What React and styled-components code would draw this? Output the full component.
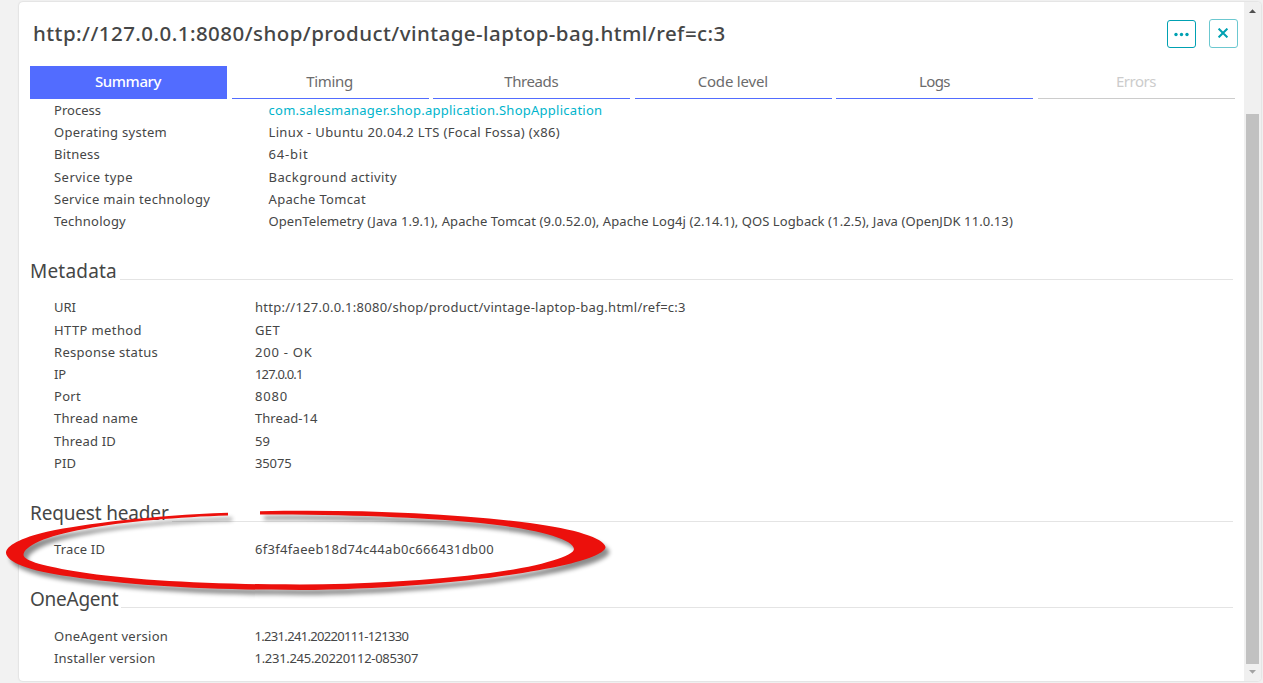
import React from 'react';
import styled, { createGlobalStyle } from 'styled-components';

const GlobalStyle = createGlobalStyle`
  *, *::before, *::after { box-sizing: border-box; }
  html, body { margin: 0; height: 100%; overflow: hidden; background: #f2f2f2; }
  body {
    font-family: "Noto Sans", "Open Sans", sans-serif;
    font-size: 13px;
    color: #454646;
  }
`;

const Page = styled.div`
  position: relative;
  display: flex;
  width: 1263px;
  height: 683px;
  padding: 2px 2px 2px 19px;
  background: #f2f2f2;
  overflow: hidden;
`;

const Panel = styled.main`
  display: flex;
  flex: 1;
  background: #fff;
  border-radius: 4px;
  overflow: hidden;
  box-shadow: 0 0 2px 0 rgba(0, 0, 0, 0.2);
`;

const Content = styled.div`
  flex: 1;
  display: flex;
  flex-direction: column;
  padding: 0 9px 0 11px;
`;

const Header = styled.header`
  display: flex;
  align-items: flex-start;
  justify-content: space-between;
  height: 64px;
  padding: 0 0 0 3px;
`;

const Title = styled.h1`
  margin: 16px 0 0;
  font-size: 20.5px;
  font-weight: 500;
  line-height: 30px;
  letter-spacing: 0.45px;
  white-space: nowrap;
`;

const Actions = styled.div`
  display: flex;
  gap: 13px;
  padding-top: 17px;
  margin-right: -3px;
`;

const IconButton = styled.button`
  display: flex;
  align-items: center;
  justify-content: center;
  width: 29px;
  height: ${(p) => (p.$soft ? 29 : 28)}px;
  margin-top: ${(p) => (p.$soft ? 0 : 1)}px;
  padding: ${(p) => (p.$soft ? '0 1px 1px 0' : '0')};
  border: 1px solid ${(p) => (p.$soft ? '#6cc8d0' : '#00a1b2')};
  border-radius: 3px;
  background: #fff;
  color: #00a1b2;
`;

const Tabs = styled.nav`
  display: grid;
  grid-template-columns: repeat(6, 197px);
  justify-content: space-between;
  height: 33px;
  flex: none;
`;

const tabColors = {
  active: { text: '#fff', line: '#526cff', fill: '#526cff' },
  normal: { text: '#6b6b6c', line: '#526cff', fill: 'transparent' },
  disabled: { text: '#cccccc', line: '#cccccc', fill: 'transparent' },
};

const Tab = styled.div`
  padding-right: 1px;
  border-bottom: 1px solid ${(p) => tabColors[p.$state].line};
  background: ${(p) => tabColors[p.$state].fill};
  color: ${(p) => tabColors[p.$state].text};
  font-size: 15px;
  font-weight: ${(p) => (p.$state === 'active' ? 500 : 400)};
  line-height: 31px;
  letter-spacing: ${(p) => p.$track}px;
  text-align: center;
`;

const Section = styled.section`
  padding-right: 2px;
`;

const SectionTitle = styled.div`
  display: flex;
  align-items: flex-end;
  gap: 3px;
  height: 26px;
  margin: 22px 0 16.25px;
`;

const Heading = styled.h2`
  margin: 0 0 -5.15px;
  font-size: 19px;
  font-weight: 400;
  line-height: 28px;
  letter-spacing: ${(p) => p.$track}px;
  white-space: nowrap;
`;

const Rule = styled.div`
  flex: 1;
  height: 1px;
  background: #e4e4e4;
`;

const Row = styled.div`
  display: grid;
  grid-template-columns: ${(p) => p.$labelWidth}px 1fr;
  padding-left: 24px;
  height: 22.2px;
  line-height: 22.2px;
  white-space: nowrap;
`;

const Cell = styled.span`
  letter-spacing: ${(p) => p.$track}px;
`;

const LinkCell = styled(Cell).attrs({ as: 'a' })`
  color: #00b4cc;
`;

const Scrollbar = styled.div`
  display: flex;
  flex-direction: column;
  align-items: center;
  justify-content: space-between;
  width: 17px;
  background: #f0f0f0;
`;

const ScrollArrow = styled.svg`
  display: block;
  width: 17px;
  height: 17px;
  flex: none;
`;

const Thumb = styled.div`
  width: 13px;
  height: 550px;
  margin-top: auto;
  background: #c1c1c1;
`;

const Marker = styled.svg`
  position: absolute;
  left: 0;
  top: 500px;
  filter: drop-shadow(4px 5px 2px rgba(0, 0, 0, 0.45));
  pointer-events: none;
`;

const tabs = [
  ['Summary', -0.4, 'active'],
  ['Timing', -0.35, 'normal'],
  ['Threads', -0.4, 'normal'],
  ['Code level', -0.2, 'normal'],
  ['Logs', -0.7, 'normal'],
  ['Errors', -0.5, 'disabled'],
];

const sections = [
  {
    labelWidth: 214.5,
    rows: [
      ['Process', 0.02, 'com.salesmanager.shop.application.ShopApplication', 0.26, true],
      ['Operating system', 0.27, 'Linux - Ubuntu 20.04.2 LTS (Focal Fossa) (x86)', 0.35],
      ['Bitness', 0.24, '64-bit', 0.82],
      ['Service type', 0.47, 'Background activity', 0.44],
      ['Service main technology', 0.31, 'Apache Tomcat', 0.33],
      [
        'Technology',
        0.23,
        'OpenTelemetry (Java 1.9.1), Apache Tomcat (9.0.52.0), Apache Log4j (2.14.1), QOS Logback (1.2.5), Java (OpenJDK 11.0.13)',
        0.09,
      ],
    ],
  },
  {
    title: 'Metadata',
    track: 0.2,
    labelWidth: 201,
    rows: [
      ['URI', 0, 'http://127.0.0.1:8080/shop/product/vintage-laptop-bag.html/ref=c:3', 0.26],
      ['HTTP method', 0.39, 'GET', 0.36],
      ['Response status', 0.29, '200 - OK', 0.76],
      ['IP', -0.14, '127.0.0.1', -0.84],
      ['Port', 0.3, '8080', 0.81],
      ['Thread name', 0.26, 'Thread-14', 0.05],
      ['Thread ID', 0.19, '59', 0.06],
      ['PID', 0.08, '35075', -0.14],
    ],
  },
  {
    title: 'Request header',
    track: -0.17,
    labelWidth: 201,
    rows: [['Trace ID', 0.15, '6f3f4faeeb18d74c44ab0c666431db00', 0.31]],
  },
  {
    title: 'OneAgent',
    track: -0.25,
    labelWidth: 200.5,
    rows: [
      ['OneAgent version', 0.25, '1.231.241.20220111-121330', -0.68],
      ['Installer version', 0.19, '1.231.245.20220112-085307', -0.29],
    ],
  },
];

export default function App() {
  return (
    <>
      <GlobalStyle />
      <Page>
        <Panel>
          <Content>
            <Header>
              <Title>http://127.0.0.1:8080/shop/product/vintage-laptop-bag.html/ref=c:3</Title>
              <Actions>
                <IconButton aria-label="More">
                  <svg width="17" height="5" viewBox="0 0 17 5" fill="currentColor">
                    <circle cx="3" cy="2.5" r="1.7" />
                    <circle cx="8.5" cy="2.5" r="1.7" />
                    <circle cx="14" cy="2.5" r="1.7" />
                  </svg>
                </IconButton>
                <IconButton $soft aria-label="Close">
                  <svg width="10" height="10" viewBox="0 0 10 10" stroke="currentColor" strokeWidth="2">
                    <path d="M0.6 0.6L9.4 9.4M9.4 0.6L0.6 9.4" />
                  </svg>
                </IconButton>
              </Actions>
            </Header>
            <Tabs>
              {tabs.map(([label, track, state]) => (
                <Tab key={label} $track={track} $state={state}>
                  {label}
                </Tab>
              ))}
            </Tabs>
            {sections.map((s, i) => (
              <Section key={i}>
                {s.title && (
                  <SectionTitle>
                    <Heading $track={s.track}>{s.title}</Heading>
                    <Rule />
                  </SectionTitle>
                )}
                {s.rows.map(([label, labelTrack, value, valueTrack, link]) => (
                  <Row key={label} $labelWidth={s.labelWidth}>
                    <Cell $track={labelTrack}>{label}</Cell>
                    {link ? (
                      <LinkCell $track={valueTrack}>{value}</LinkCell>
                    ) : (
                      <Cell $track={valueTrack}>{value}</Cell>
                    )}
                  </Row>
                ))}
              </Section>
            ))}
          </Content>
          <Scrollbar>
            <ScrollArrow viewBox="0 0 17 17">
              <path d="M5 11L8.5 7.2L12 11Z" fill="#505050" />
            </ScrollArrow>
            <Thumb />
            <ScrollArrow viewBox="0 0 17 17">
              <path d="M5 6L8.5 9.8L12 6Z" fill="#a3a3a3" />
            </ScrollArrow>
          </Scrollbar>
        </Panel>
        <Marker width="640" height="110" viewBox="0 500 640 110">
          <path
            fill="#ec100c"
            d="M228 512.8 C150 515.5 85 524 48 531.5 C20 538 6 546 6 553 C7 562 28 571 70 576.5
               C130 585.5 210 590 300 590 C400 589 500 579 560 566 C592 559 605.5 552 605.5 547
               C604 538 575 529 530 523 C450 513 360 509.5 260 511.2 L260 514.4
               C350 514.5 420 517 480 523 C535 528.5 574 539 574 549 C574 556 540 566.5 490 573
               C430 580.5 360 584.5 300 584.5 C210 584.5 130 580 80 572 C45 566.5 24 561 23.5 555
               C24 546 45 536 85 529 C125 521.5 180 517 228 515.6 Z"
          />
        </Marker>
      </Page>
    </>
  );
}
